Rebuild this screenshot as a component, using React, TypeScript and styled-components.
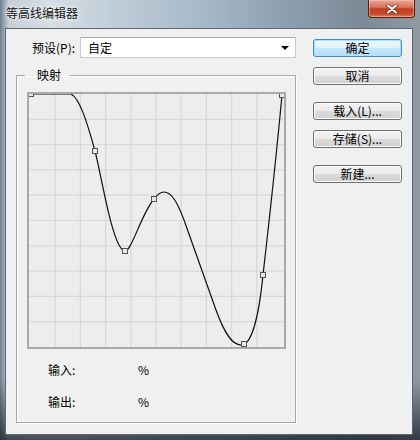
import React from "react";
import styled, { createGlobalStyle } from "styled-components";

const GlobalStyle = createGlobalStyle`
  body {
    margin: 0;
    background: #7f8c97;
  }
`;

const Window = styled.div`
  width: 420px;
  height: 440px;
  box-sizing: border-box;
  display: flex;
  flex-direction: column;
  font-family: "Noto Sans CJK SC", "Noto Sans", sans-serif;
  font-size: 12px;
  color: #000;
  background:
    linear-gradient(180deg, rgba(0, 0, 0, 0) 0, rgba(0, 0, 0, 0) 380px, rgba(20, 28, 38, 0.75) 440px),
    linear-gradient(90deg, #6f7f8d 0, #c3ced7 2%, #d6dee5 12%, #bccad6 30%, #a2b5c4 52%, #8b9dac 70%, #7c8a96 86%, #8e99a2 100%);
`;

const TitleBar = styled.div`
  height: 28px;
  display: flex;
  align-items: flex-start;
  padding-left: 6px;
`;

const TitleText = styled.div`
  line-height: 26px;
  font-size: 12px;
  color: #111;
  text-shadow: 0 0 6px rgba(255, 255, 255, 0.9), 0 0 3px rgba(255, 255, 255, 0.9);
  letter-spacing: 0;
`;

const CloseButton = styled.div`
  margin-left: auto;
  margin-right: 5px;
  width: 47px;
  height: 18px;
  box-sizing: border-box;
  border: 1px solid #5e1c12;
  border-top: none;
  border-radius: 0 0 4px 4px;
  background: linear-gradient(180deg, #e9a797 0%, #d9735f 42%, #c2401f 52%, #c54a28 80%, #dc7a58 100%);
  box-shadow: inset 0 0 0 1px rgba(255, 210, 200, 0.45);
  display: flex;
  align-items: center;
  justify-content: center;
`;

const Client = styled.div`
  flex: 1;
  margin: 0 7px 5px 5px;
  background: #f0f0f0;
  border: 1px solid rgba(58, 68, 80, 0.8);
  display: flex;
  gap: 17px;
  padding: 0 10px 0 10px;
`;

const LeftColumn = styled.div`
  width: 280px;
  display: flex;
  flex-direction: column;
  padding-top: 8px;
`;

const RightColumn = styled.div`
  width: 89px;
  display: flex;
  flex-direction: column;
  padding-top: 10px;
`;

const PresetRow = styled.div`
  height: 21px;
  display: flex;
  align-items: center;
  padding-left: 16px;
`;

const PresetLabel = styled.span`
  width: 48px;
  white-space: nowrap;
`;

const Select = styled.div`
  flex: 1;
  height: 21px;
  box-sizing: border-box;
  background: #fff;
  border: 1px solid #c9cbd0;
  border-top-color: #abadb3;
  display: flex;
  align-items: center;
  padding: 0 6px 0 7px;
`;

const SelectValue = styled.span`
  flex: 1;
`;

const Arrow = styled.span`
  width: 0;
  height: 0;
  border-left: 4px solid transparent;
  border-right: 4px solid transparent;
  border-top: 4px solid #000;
`;

const GroupBox = styled.fieldset`
  margin: 9px 0 0;
  padding: 9px 9px 12px 10px;
  border: 1px solid #a6a6a6;
  box-shadow: inset 1px 1px 0 #fff, 1px 1px 0 #fff;
  min-width: 0;
`;

const GroupTitle = styled.legend`
  margin-left: -2px;
  padding: 0 9px 0 12px;
  line-height: 16px;
  font-size: 12px;
`;

const GraphFrame = styled.div`
  width: 259px;
  height: 257px;
  box-sizing: border-box;
  border: 2px solid #a9a9a9;
  background: #ededed;
`;

const Readouts = styled.div`
  display: grid;
  grid-template-columns: 90px auto;
  row-gap: 16px;
  margin-top: 13px;
  padding-left: 21px;
  line-height: 16px;
`;

const Button = styled.div<{ $gap: number; $default?: boolean }>`
  height: 18px;
  margin-top: ${(p) => p.$gap}px;
  box-sizing: border-box;
  border: 1px solid ${(p) => (p.$default ? "#3c8fc4" : "#707070")};
  border-radius: 3px;
  background: ${(p) =>
    p.$default
      ? "linear-gradient(180deg, #eef8fd 0%, #dff2fc 50%, #c9e9fb 50%, #b4dff6 100%)"
      : "linear-gradient(180deg, #f3f3f3 0%, #ebebeb 50%, #dddddd 50%, #d0d0d0 100%)"};
  box-shadow: inset 0 0 0 1px ${(p) => (p.$default ? "#a8e1fb" : "#fbfbfb")};
  display: flex;
  align-items: center;
  justify-content: center;
  line-height: 16px;
`;

const gridX = Array.from({ length: 9 }, (_, i) => 30 + 25.2 * (i + 1));
const gridY = Array.from({ length: 9 }, (_, i) => 94 + 25.3 * (i + 1));

const handles: [number, number][] = [
  [31, 94],
  [95, 151],
  [125, 251],
  [154, 199],
  [244, 344],
  [263, 275],
  [282, 95],
];

const curve =
  "M31,94 L71,94 C79,98 86,118 95,151 C102,178 112,245 124,251 " +
  "C131,254 141,214 154,199 C157,195 160,192 164,192 C172,192 178,204 184,220 " +
  "L216,310 C224,332 232,346 242,345 C252,344 259,315 263,275 C267,240 276,160 282,95";

const ContourGraph = () => (
  <svg width="255" height="253" viewBox="29 94 255 253" style={{ display: "block" }}>
    {gridX.map((x) => (
      <line key={`v${x}`} x1={x} y1={94} x2={x} y2={347} stroke="#d8d8d8" strokeWidth="1.2" />
    ))}
    {gridY.map((y) => (
      <line key={`h${y}`} x1={29} y1={y} x2={284} y2={y} stroke="#d8d8d8" strokeWidth="1.2" />
    ))}
    <path d={curve} fill="none" stroke="#111" strokeWidth="1.2" />
    {handles.map(([x, y]) => (
      <rect
        key={`${x}-${y}`}
        x={x - 2.5}
        y={y - 2.5}
        width="5"
        height="5"
        fill="#e8e8e8"
        stroke="#555"
        strokeWidth="1"
      />
    ))}
  </svg>
);

const CloseGlyph = () => (
  <svg width="12" height="10" viewBox="0 0 12 10">
    <path d="M2,1.5 L10,8.5 M10,1.5 L2,8.5" stroke="#6b1a0e" strokeWidth="3.6" strokeLinecap="round" />
    <path d="M2,1.5 L10,8.5 M10,1.5 L2,8.5" stroke="#fff" strokeWidth="2.2" strokeLinecap="round" />
  </svg>
);

const App: React.FC = () => (
  <>
    <GlobalStyle />
    <Window>
      <TitleBar>
        <TitleText>等高线编辑器</TitleText>
        <CloseButton>
          <CloseGlyph />
        </CloseButton>
      </TitleBar>
      <Client>
        <LeftColumn>
          <PresetRow>
            <PresetLabel>预设(P):</PresetLabel>
            <Select>
              <SelectValue>自定</SelectValue>
              <Arrow />
            </Select>
          </PresetRow>
          <GroupBox>
            <GroupTitle>映射</GroupTitle>
            <GraphFrame>
              <ContourGraph />
            </GraphFrame>
            <Readouts>
              <span>输入:</span>
              <span>%</span>
              <span>输出:</span>
              <span>%</span>
            </Readouts>
          </GroupBox>
        </LeftColumn>
        <RightColumn>
          <Button $gap={0} $default>确定</Button>
          <Button $gap={10}>取消</Button>
          <Button $gap={17}>载入(L)...</Button>
          <Button $gap={10}>存储(S)...</Button>
          <Button $gap={17}>新建...</Button>
        </RightColumn>
      </Client>
    </Window>
  </>
);

export default App;
